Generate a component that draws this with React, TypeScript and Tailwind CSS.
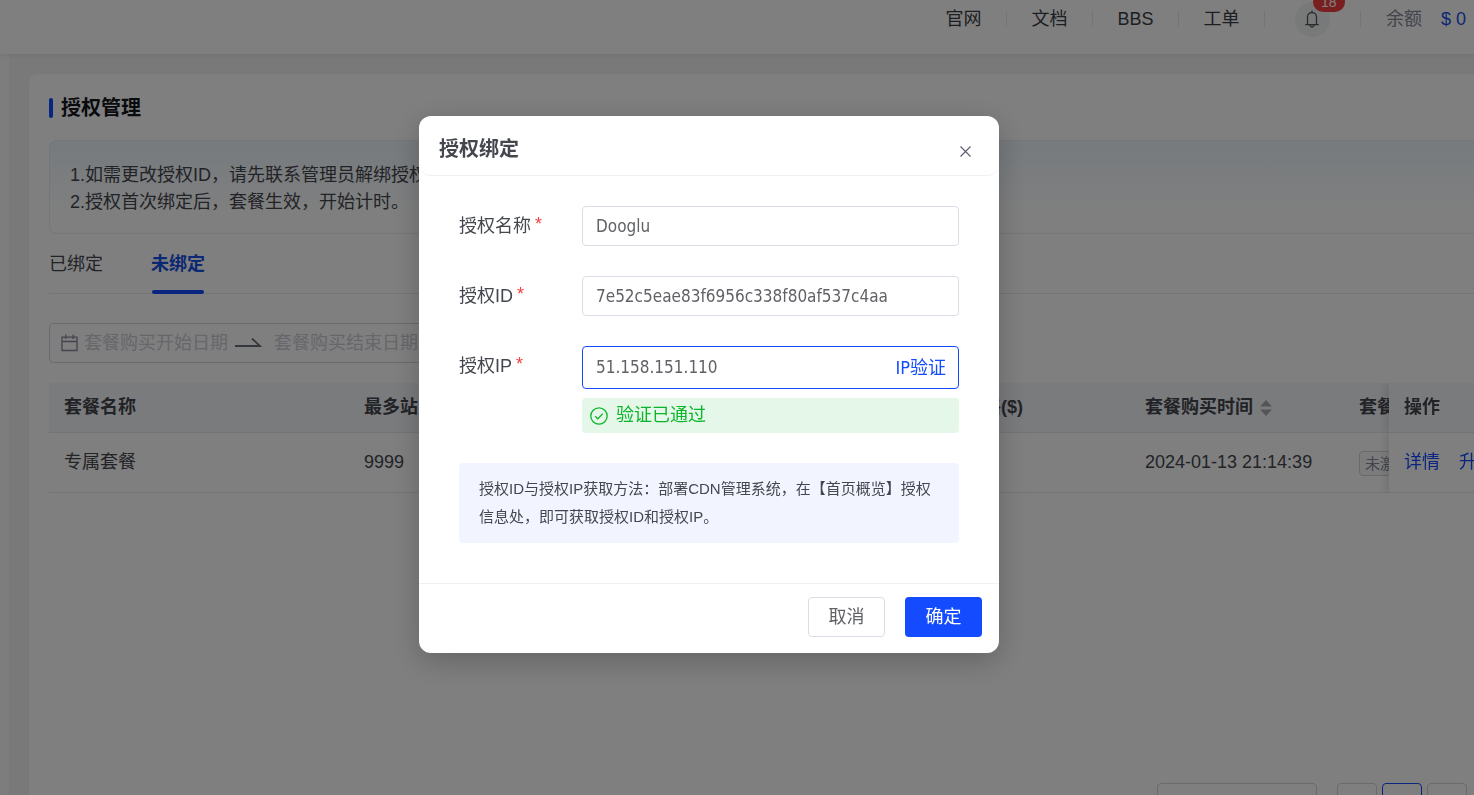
import React from "react";

const navLinks = ["官网", "文档", "BBS", "工单"];

const Divider = () => <span className="h-4 w-px bg-[#e9ebee]" />;

const Header = () => {
  return (
    <header className="relative z-10 flex h-[54px] items-center justify-end bg-white pb-4 pr-2 shadow-[0_1px_6px_rgba(0,0,0,0.08)]">
      <nav className="flex items-center text-[#3a3c44]">
        {navLinks.map((link) => (
          <React.Fragment key={link}>
            <a href="#" className="w-[85px] text-center">
              {link}
            </a>
            <Divider />
          </React.Fragment>
        ))}
      </nav>
      <button
        type="button"
        aria-label="消息"
        className="relative mx-[30px] flex h-[35px] w-[35px] items-center justify-center rounded-full bg-[#f0f2f2]"
      >
        <svg viewBox="0 0 14 18" className="h-[18px] w-3.5" fill="none" stroke="#4e5969" strokeWidth="1.3">
          <path d="M2.5 14.5V7a4.5 4.5 0 0 1 9 0v7.5M.3 14.6h13.4M7 2.5V.4M5 15.2c.2 1.300.9 1.900 2 1.900s1.800-.6 2-1.900" />
        </svg>
        <span className="absolute -top-2.5 left-[18px] h-5 rounded-full bg-[#f53f3f] px-2 text-sm leading-5 text-white">
          18
        </span>
      </button>
      <Divider />
      <span className="ml-[25px] text-[#86899a]">余额</span>
      <span className="ml-[19px] text-[#1650e6]">$ 0</span>
    </header>
  );
};

const Notice = () => {
  return (
    <div className="mt-[18px] rounded-l-lg border border-r-0 border-[#e9edf2] bg-gradient-to-b from-[#eef6fc] to-white to-80% px-5 pb-[17px] pt-[21px] leading-[27px] text-[#45474f]">
      <p>1.如需更改授权ID，请先联系管理员解绑授权</p>
      <p>2.授权首次绑定后，套餐生效，开始计时。</p>
    </div>
  );
};

const Tabs = () => {
  return (
    <div className="flex h-[60px] gap-12 border-b border-[#e9eaee]">
      <button type="button" className="h-[60px] text-[#45474f]">
        已绑定
      </button>
      <button
        type="button"
        className="relative h-[60px] font-bold text-[#1650e6] after:absolute after:inset-x-px after:bottom-0 after:h-1 after:rounded-sm after:bg-[#144bff]"
      >
        未绑定
      </button>
    </div>
  );
};

const DateRange = () => {
  return (
    <div className="mt-[29px] flex h-10 w-[440px] items-center rounded border border-[#d5d6de] pl-[11px]">
      <svg viewBox="0 0 17 18" className="h-[18px] w-[17px] shrink-0" fill="none" stroke="#86899a" strokeWidth="1.3">
        <path d="M1 3.2h15v13.3H1zM1 7.5h15M4.8.5v4.5M12.2.5v4.5" />
      </svg>
      <input
        aria-label="套餐购买开始日期"
        placeholder="套餐购买开始日期"
        className="ml-1.5 w-[151px] outline-none placeholder:text-[#cccdd6]"
      />
      <svg viewBox="0 0 27 12" className="h-3 w-[27px] shrink-0" fill="none" stroke="#6b6e7c" strokeWidth="1.8">
        <path d="M0 9h25L17 1.500" />
      </svg>
      <input
        aria-label="套餐购买结束日期"
        placeholder="套餐购买结束日期"
        className="ml-3 w-[151px] outline-none placeholder:text-[#cccdd6]"
      />
    </div>
  );
};

const cell = "whitespace-nowrap border-b border-[#e6e8ee] px-[15px] text-left";
const fixedCell =
  "sticky right-0 overflow-hidden whitespace-nowrap border-b border-[#e6e8ee] pl-[15px] text-left shadow-[-4px_0_8px_rgba(0,0,0,0.1)] [clip-path:inset(0_0_0_-12px)]";

const PlanTable = () => {
  return (
    <div className="mt-5 min-h-[380px] overflow-hidden">
      <table className="w-[1515px] table-fixed border-separate border-spacing-0 text-[#45474f]">
        <colgroup>
          <col className="w-[300px]" />
          <col className="w-[565px]" />
          <col className="w-[216px]" />
          <col className="w-[214px]" />
          <col className="w-[135px]" />
          <col className="w-[85px]" />
        </colgroup>
        <thead>
          <tr className="h-[50px] bg-[#f5f7fa]">
            <th className={cell}>套餐名称</th>
            <th className={cell}>最多站点数</th>
            <th className={cell}>套餐价格($)</th>
            <th className={cell}>
              <span className="flex items-center gap-[7px]">
                套餐购买时间
                <svg viewBox="0 0 12 16" className="h-4 w-3" fill="#a9abb5">
                  <path d="M6 0l6 6.5H0zM6 16l6-6.5H0z" />
                </svg>
              </span>
            </th>
            <th className={cell}>套餐状态</th>
            <th className={`${fixedCell} bg-[#f5f7fa]`}>操作</th>
          </tr>
        </thead>
        <tbody>
          <tr className="h-[60px]">
            <td className={cell}>专属套餐</td>
            <td className={cell}>9999</td>
            <td className={cell} />
            <td className={cell}>2024-01-13 21:14:39</td>
            <td className={cell}>
              <span className="inline-block h-[25px] rounded border border-[#d0d4de] bg-[#f8f9fb] px-[5px] align-middle text-[15px] leading-[23px] text-[#86899a]">
                未激活
              </span>
            </td>
            <td className={`${fixedCell} bg-white text-[#144bff]`}>
              <a href="#">详情</a>
              <a href="#" className="ml-[19px]">
                升级
              </a>
            </td>
          </tr>
        </tbody>
      </table>
    </div>
  );
};

const Pagination = () => {
  return (
    <div className="mt-5 flex h-10 items-center justify-end gap-[5px] pr-[7px] text-[15px] text-[#45474f]">
      <span className="mr-[15px]">共 1 条</span>
      <select aria-label="每页条数" className="mr-[15px] h-10 w-40 appearance-none rounded border border-[#d5d6de] px-3">
        <option>10条/页</option>
      </select>
      <button type="button" aria-label="上一页" className="h-10 w-10 rounded border border-[#d5d6de]">
        ‹
      </button>
      <button type="button" className="h-10 w-10 rounded border border-[#144bff] text-[#144bff]">
        1
      </button>
      <button type="button" aria-label="下一页" className="h-10 w-10 rounded border border-[#d5d6de]">
        ›
      </button>
    </div>
  );
};

const FieldLabel = ({ id, children }: { id: string; children: React.ReactNode }) => (
  <label htmlFor={id} className="flex h-10 items-center text-[#45474f]">
    {children}
    <span className="mb-1 ml-1 leading-5 text-[#f53f3f]">*</span>
  </label>
);

const field =
  "h-10 w-full rounded border border-[#dcdce6] px-[13px] font-['DejaVu_Sans_Condensed','Noto_Sans_CJK_SC',sans-serif] text-[17px] text-[#606266] outline-none";

const BindDialog = () => {
  return (
    <div className="fixed inset-0 z-20 flex items-start justify-center bg-black/50 pr-14 pt-[116px]">
      <div
        role="dialog"
        aria-labelledby="bind-title"
        className="w-[580px] rounded-xl bg-white shadow-[0_8px_30px_rgba(0,0,0,0.22)]"
      >
        <div className="flex h-[60px] items-center justify-between rounded-xl border-b border-[#f0f0f3] pl-5 pr-7">
          <h2 id="bind-title" className="pt-1.5 text-xl font-bold text-[#45474f]">
            授权绑定
          </h2>
          <button type="button" aria-label="关闭" className="pt-3">
            <svg viewBox="0 0 11 11" className="h-[11px] w-[11px]" fill="none" stroke="#5d6074" strokeWidth="1.2">
              <path d="M.5.5l10 10M10.5.5l-10 10" />
            </svg>
          </button>
        </div>
        <form className="px-10 pb-10 pt-[30px]">
          <div className="grid grid-cols-[123px_1fr] gap-y-[30px]">
            <FieldLabel id="name">授权名称</FieldLabel>
            <input id="name" className={field} defaultValue="Dooglu" />
            <FieldLabel id="auth-id">授权ID</FieldLabel>
            <input id="auth-id" className={field} defaultValue="7e52c5eae83f6956c338f80af537c4aa" />
            <FieldLabel id="auth-ip">授权IP</FieldLabel>
            <div>
              <div className="flex h-[43px] items-center rounded border border-[#144bff] px-3 font-['DejaVu_Sans_Condensed','Noto_Sans_CJK_SC',sans-serif]">
                <input
                  id="auth-ip"
                  className="ml-px min-w-0 flex-1 text-[17px] text-[#606266] outline-none"
                  defaultValue="51.158.151.110"
                />
                <button type="button" className="text-[#144bff]">
                  IP验证
                </button>
              </div>
              <p className="mt-[9px] flex h-[35px] items-center gap-2 rounded bg-[#e4f7e9] pl-2 text-[#0db52b]">
                <svg viewBox="0 0 18 18" className="h-[18px] w-[18px]" fill="none" stroke="currentColor" strokeWidth="1.3">
                  <circle cx="9" cy="9" r="8.2" />
                  <path d="M5.2 9.3l2.6 2.5 5-5.2" />
                </svg>
                验证已通过
              </p>
            </div>
          </div>
          <p className="mt-[30px] rounded bg-[#f2f5ff] px-5 py-3 text-[15px] leading-7 text-[#45474f]">
            授权ID与授权IP获取方法：部署CDN管理系统，在【首页概览】授权信息处，即可获取授权ID和授权IP。
          </p>
        </form>
        <div className="flex justify-end gap-5 border-t border-[#f0f0f3] pb-4 pl-5 pr-[17px] pt-[13px]">
          <button type="button" className="h-10 w-[77px] rounded border border-[#dcdce6] text-[#606266]">
            取消
          </button>
          <button type="button" className="h-10 w-[77px] rounded bg-[#144bff] text-white">
            确定
          </button>
        </div>
      </div>
    </div>
  );
};

export default function App() {
  return (
    <div className="flex h-screen flex-col overflow-hidden bg-[#f2f3f3] font-['Liberation_Sans','Noto_Sans_CJK_SC',sans-serif] text-lg leading-[27px]">
      <Header />
      <div className="flex min-h-0 flex-1">
        <aside className="w-[9px] shrink-0 bg-[#fafafa]" />
        <main className="min-w-0 flex-1 pl-5 pt-5">
          <section className="rounded-tl-lg bg-white pb-10 pl-5 pt-5">
            <h1 className="flex items-center gap-2 text-xl font-bold text-[#15161c]">
              <span className="h-5 w-1 rounded-sm bg-[#144bff]" />
              授权管理
            </h1>
            <Notice />
            <Tabs />
            <DateRange />
            <PlanTable />
            <Pagination />
          </section>
        </main>
      </div>
      <BindDialog />
    </div>
  );
}
